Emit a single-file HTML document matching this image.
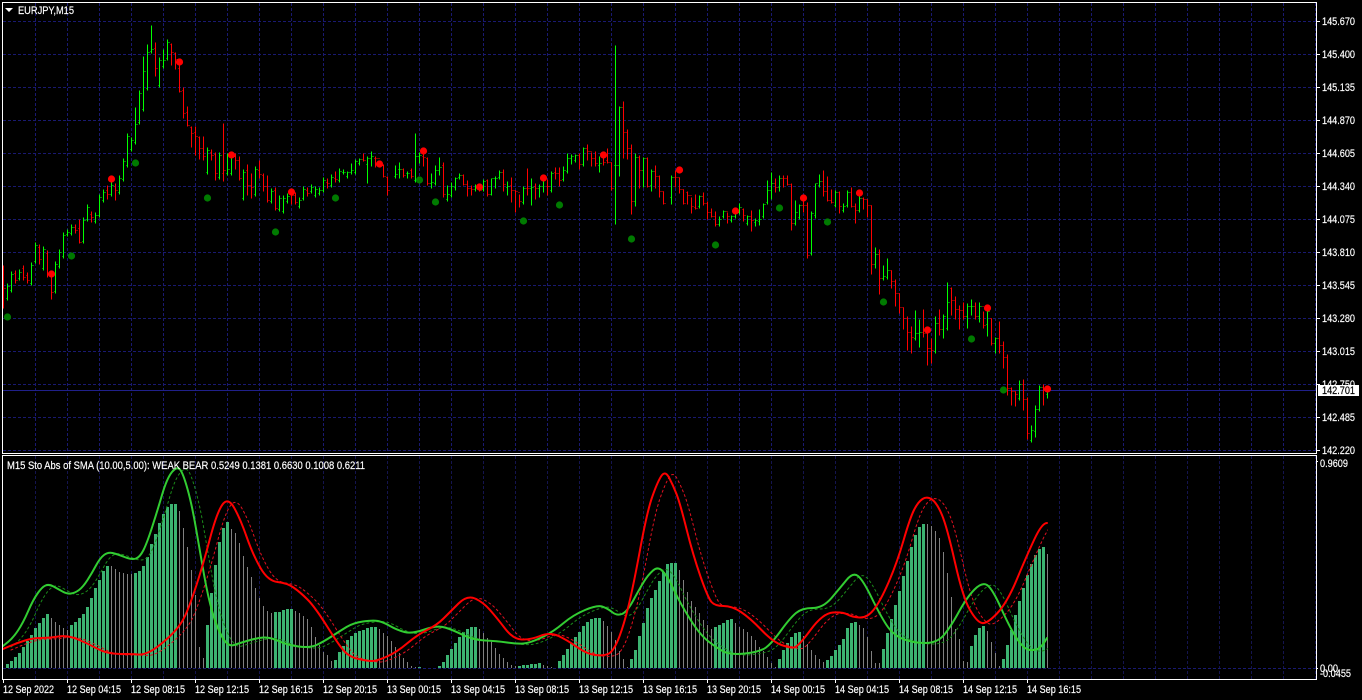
<!DOCTYPE html>
<html><head><meta charset="utf-8"><title>EURJPY,M15</title>
<style>html,body{margin:0;padding:0;background:#000;width:1362px;height:700px;overflow:hidden}svg{display:block}text{font-family:"Liberation Sans",sans-serif;font-size:11px;fill:#fff;stroke:#fff;stroke-width:.18}</style></head>
<body>
<svg width="1362" height="700" viewBox="0 0 1362 700" xmlns="http://www.w3.org/2000/svg">
<defs>
<clipPath id="c"><rect x="3" y="456" width="1045" height="223"/></clipPath>
<path id="gs" d="M3 646L8 642Q13 638 18 630.5Q23 623 28 611.5Q33 600 37.5 593.5Q42 587 45.5 585.5Q49 584 53.5 586.5Q58 589 62.5 591.5Q67 594 71 593.5Q75 593 79 590Q83 587 87.5 580Q92 573 96 565.5Q100 558 104 555Q108 552 112.5 553Q117 554 124.5 557Q132 560 136 558.5Q140 557 143.5 550Q147 543 152 527.5Q157 512 162 495Q167 478 172 472Q177 466 180 469.5Q183 473 187.5 489Q192 505 196 528.5Q200 552 204 574.5Q208 597 212.5 612.5Q217 628 222.5 637.5Q228 647 234 645Q240 643 248.5 640.5Q257 638 263.5 637.5Q270 637 278.5 641Q287 645 298.5 646.5Q310 648 316.5 645Q323 642 331.5 636.5Q340 631 346.5 627Q353 623 363 621.5Q373 620 378 621Q383 622 390 626Q397 630 404.5 632Q412 634 424.5 629.5Q437 625 445 627.5Q453 630 463 635Q473 640 485 640.5Q497 641 507 642.5Q517 644 523.5 643.5Q530 643 541.5 637.5Q553 632 563 623.5Q573 615 585 610Q597 605 602 606.5Q607 608 612 612Q617 616 622 614Q627 612 633.5 600Q640 588 644 581.5Q648 575 653 570.5Q658 566 663 571.5Q668 577 674 590Q680 603 690 619Q700 635 708.5 641.5Q717 648 723.5 651.5Q730 655 745 653.5Q760 652 766 647.5Q772 643 781 630.5Q790 618 796 613Q802 608 812.5 608Q823 608 831.5 598Q840 588 846.5 580Q853 572 858 576Q863 580 871.5 597.5Q880 615 886.5 625Q893 635 903 639Q913 643 925 643Q937 643 943.5 635.5Q950 628 958.5 612.5Q967 597 974.5 589.5Q982 582 987 585Q992 588 1001 608Q1010 628 1016.5 638Q1023 648 1028 649.5Q1033 651 1037.5 649Q1042 647 1047 638"/>
<path id="rs" d="M3 649L10 646Q17 643 25 640.5Q33 638 41.5 638Q50 638 58.5 636.5Q67 635 77 639Q87 643 97 648.5Q107 654 120 654Q133 654 138 654.5Q143 655 150 651.5Q157 648 168.5 637.5Q180 627 185 616Q190 605 196.5 585Q203 565 210 538.5Q217 512 222.5 504.5Q228 497 234 507.5Q240 518 246.5 536.5Q253 555 260.5 568Q268 581 277.5 582Q287 583 293.5 587.5Q300 592 307.5 599.5Q315 607 327.5 627Q340 647 345 652Q350 657 358.5 659Q367 661 372 661Q377 661 387 656.5Q397 652 407 643.5Q417 635 427 630Q437 625 443.5 618.5Q450 612 458.5 603.5Q467 595 475 598.5Q483 602 490 610Q497 618 505 628.5Q513 639 521.5 639.5Q530 640 540 636Q550 632 558.5 636Q567 640 577 647Q587 654 595 655Q603 656 608 654Q613 652 618 640Q623 628 628 608Q633 588 640 550Q647 512 652 497.5Q657 483 661 476.5Q665 470 669 477.5Q673 485 676.5 494Q680 503 686.5 529Q693 555 700.5 576.5Q708 598 711.5 602Q715 606 723.5 606Q732 606 741 612Q750 618 761.5 630Q773 642 781.5 645Q790 648 794 647.5Q798 647 810.5 630Q823 613 833 612.5Q843 612 847.5 614.5Q852 617 859.5 617.5Q867 618 873.5 610Q880 602 888.5 582.5Q897 563 903.5 540.5Q910 518 914 510Q918 502 922.5 499Q927 496 932 499.5Q937 503 942 515Q947 527 955 562.5Q963 598 970 610Q977 622 982 623Q987 624 997 613.5Q1007 603 1017 579Q1027 555 1034.5 539Q1042 523 1047 523"/>
</defs>
<rect width="1362" height="700" fill="#000"/>

<!-- grid -->
<g fill="none" stroke="#191970" stroke-width="1" stroke-dasharray="3 2" shape-rendering="crispEdges">
<path d="M3 21.5H1316M3 54.5H1316M3 87.5H1316M3 120.5H1316M3 153.5H1316M3 186.5H1316M3 219.5H1316M3 252.5H1316M3 285.5H1316M3 318.5H1316M3 351.5H1316M3 384.5H1316M3 417.5H1316M3 450.5H1316"/>
<path d="M35.5 3V453M67.5 3V453M99.5 3V453M131.5 3V453M163.5 3V453M195.5 3V453M227.5 3V453M259.5 3V453M291.5 3V453M323.5 3V453M355.5 3V453M387.5 3V453M419.5 3V453M451.5 3V453M483.5 3V453M515.5 3V453M547.5 3V453M579.5 3V453M611.5 3V453M643.5 3V453M675.5 3V453M707.5 3V453M739.5 3V453M771.5 3V453M803.5 3V453M835.5 3V453M867.5 3V453M899.5 3V453M931.5 3V453M963.5 3V453M995.5 3V453M1027.5 3V453M1059.5 3V453M1091.5 3V453M1123.5 3V453M1155.5 3V453M1187.5 3V453M1219.5 3V453M1251.5 3V453M1283.5 3V453M1315.5 3V453"/>
<path stroke="#14144f" d="M35.5 456V679M67.5 456V679M99.5 456V679M131.5 456V679M163.5 456V679M195.5 456V679M227.5 456V679M259.5 456V679M291.5 456V679M323.5 456V679M355.5 456V679M387.5 456V679M419.5 456V679M451.5 456V679M483.5 456V679M515.5 456V679M547.5 456V679M579.5 456V679M611.5 456V679M643.5 456V679M675.5 456V679M707.5 456V679M739.5 456V679M771.5 456V679M803.5 456V679M835.5 456V679M867.5 456V679M899.5 456V679M931.5 456V679M963.5 456V679M995.5 456V679M1027.5 456V679M1059.5 456V679M1091.5 456V679M1123.5 456V679M1155.5 456V679M1187.5 456V679M1219.5 456V679M1251.5 456V679M1283.5 456V679M1315.5 456V679"/>
<path d="M3 668.5H1316"/>
</g>
<path d="M3 390.5H1316" stroke="#20208a" fill="none" shape-rendering="crispEdges"/>

<!-- price bars -->
<g fill="none" stroke-width="1" shape-rendering="crispEdges" transform="translate(.5 .5)">
<path stroke="#00ff00" d="M7 283V300M6 298h1M8 286h1M11 271V292M10 290h1M12 274h1M19 269V280M18 278h1M20 272h1M31 262V285M30 283h1M32 265h1M35 242V263M34 261h1M36 245h1M43 246V270M42 268h1M44 249h1M55 261V293M54 291h1M56 264h1M59 249V268M58 266h1M60 252h1M63 232V258M62 256h1M64 235h1M67 229V236M66 234h1M68 232h1M71 224V235M70 233h1M72 227h1M83 217V243M82 241h1M84 220h1M87 204V221M86 219h1M88 207h1M95 212V223M94 221h1M96 215h1M99 194V217M98 215h1M100 197h1M103 189V202M102 200h1M104 192h1M111 182V196M110 194h1M112 185h1M119 175V194M118 192h1M120 178h1M123 158V181M122 179h1M124 161h1M127 133V167M126 165h1M128 136h1M131 137V151M130 149h1M132 140h1M135 107V144M134 142h1M136 124h1M139 90V124M138 122h1M140 93h1M143 56V111M142 109h1M144 71h1M147 44V90M146 88h1M148 52h1M151 25V53M150 51h1M152 49h1M159 57V87M158 85h1M160 60h1M163 49V68M162 66h1M164 60h1M167 39V60M166 58h1M168 42h1M207 147V174M206 172h1M208 150h1M219 152V179M218 177h1M220 155h1M227 153V175M226 173h1M228 169h1M231 153V175M230 173h1M232 156h1M243 169V200M242 198h1M244 172h1M255 166V196M254 194h1M256 169h1M271 188V203M270 201h1M272 191h1M279 195V211M278 209h1M280 198h1M283 195V213M282 211h1M284 198h1M287 193V203M286 201h1M288 196h1M299 197V208M298 206h1M300 200h1M303 186V200M302 198h1M304 189h1M311 184V193M310 191h1M312 187h1M315 186V197M314 195h1M316 189h1M319 187V195M318 193h1M320 190h1M323 177V192M322 190h1M324 180h1M331 174V187M330 185h1M332 177h1M339 168V182M338 180h1M340 171h1M343 169V174M342 172h1M344 172h1M347 171V178M346 176h1M348 172h1M351 163V174M350 172h1M352 170h1M355 159V174M354 172h1M356 161h1M359 158V165M358 163h1M360 159h1M367 156V183M366 164h1M368 158h1M371 151V166M370 158h1M372 156h1M395 165V178M394 176h1M396 174h1M399 162V178M398 169h1M400 169h1M407 171V178M406 173h1M408 173h1M415 133V182M414 180h1M416 156h1M419 152V163M418 156h1M420 155h1M431 173V188M430 183h1M432 182h1M435 165V185M434 183h1M436 170h1M439 157V175M438 170h1M440 167h1M447 185V201M446 199h1M448 194h1M451 182V197M450 195h1M452 186h1M455 177V190M454 187h1M456 178h1M459 173V179M458 177h1M460 175h1M475 184V191M474 189h1M476 186h1M483 179V191M482 189h1M484 181h1M491 178V195M490 194h1M492 178h1M495 176V188M494 178h1M496 178h1M499 170V179M498 177h1M500 172h1M507 181V195M506 187h1M508 186h1M523 186V204M522 202h1M524 188h1M531 178V205M530 188h1M532 187h1M539 184V197M538 188h1M540 186h1M543 175V192M542 186h1M544 179h1M551 171V192M550 190h1M552 173h1M563 166V181M562 179h1M564 170h1M567 153V173M566 171h1M568 158h1M571 154V164M570 158h1M572 156h1M575 154V162M574 160h1M576 155h1M583 147V166M582 164h1M584 148h1M599 156V172M598 165h1M600 163h1M615 45V224M614 165h1M616 165h1M619 106V176M618 165h1M620 107h1M635 153V206M634 201h1M636 157h1M643 157V187M642 170h1M644 158h1M651 169V191M650 185h1M652 171h1M671 175V204M670 197h1M672 177h1M699 195V208M698 206h1M700 196h1M719 216V226M718 224h1M720 219h1M723 210V218M722 216h1M724 211h1M731 215V222M730 220h1M732 216h1M735 207V218M734 216h1M736 210h1M739 203V214M738 212h1M740 207h1M747 215V225M746 223h1M748 216h1M755 218V226M754 222h1M756 220h1M759 209V225M758 221h1M760 219h1M763 203V218M762 216h1M764 204h1M767 180V204M766 202h1M768 190h1M771 172V199M770 190h1M772 183h1M779 175V191M778 187h1M780 178h1M795 200V225M794 223h1M796 212h1M799 204V219M798 217h1M800 205h1M811 211V255M810 253h1M812 213h1M815 183V218M814 215h1M816 183h1M819 174V187M818 185h1M820 181h1M835 190V207M834 205h1M836 192h1M843 203V212M842 210h1M844 206h1M847 190V207M846 205h1M848 192h1M859 193V212M858 210h1M860 198h1M875 247V268M874 264h1M876 254h1M883 265V280M882 278h1M884 276h1M887 258V279M886 277h1M888 270h1M915 310V340M914 338h1M916 333h1M919 319V347M918 333h1M920 332h1M935 316V353M934 351h1M936 323h1M943 314V338M942 329h1M944 316h1M947 282V330M946 328h1M948 302h1M967 303V328M966 316h1M968 306h1M971 299V315M970 306h1M972 306h1M979 302V322M978 316h1M980 306h1M987 310V336M986 324h1M988 311h1M995 337V353M994 343h1M996 338h1M1019 380V400M1018 398h1M1020 384h1M1031 425V442M1030 440h1M1032 430h1M1035 405V437M1034 431h1M1036 409h1M1039 385V411M1038 409h1M1040 387h1M1047 388V398M1046 394h1M1048 389h1"/>
<path stroke="#ff0000" d="M3 265V308M2 268h1M4 288h1M15 270V283M14 273h1M16 280h1M23 265V280M22 268h1M24 277h1M27 272V283M26 275h1M28 280h1M39 244V264M38 247h1M40 259h1M47 250V277M46 253h1M48 274h1M51 273V299M50 276h1M52 292h1M75 224V233M74 227h1M76 230h1M79 219V243M78 228h1M80 242h1M91 211V222M90 214h1M92 217h1M107 185V199M106 190h1M108 194h1M115 183V200M114 186h1M116 190h1M155 42V76M154 48h1M156 68h1M171 43V65M170 44h1M172 52h1M175 52V69M174 53h1M176 59h1M179 63V92M178 68h1M180 91h1M183 87V118M182 90h1M184 113h1M187 106V126M186 112h1M188 125h1M191 126V147M190 127h1M192 133h1M195 126V155M194 132h1M196 136h1M199 136V159M198 137h1M200 148h1M203 136V160M202 148h1M204 156h1M211 149V160M210 152h1M212 155h1M215 152V180M214 154h1M216 173h1M223 123V181M222 173h1M224 170h1M235 153V169M234 156h1M236 160h1M239 156V180M238 160h1M240 178h1M247 164V195M246 170h1M248 185h1M251 173V198M250 185h1M252 187h1M259 160V178M258 170h1M260 174h1M263 173V191M262 175h1M264 186h1M267 175V202M266 186h1M268 200h1M275 187V210M274 190h1M276 208h1M291 190V204M290 194h1M292 195h1M295 192V204M294 195h1M296 202h1M307 187V196M306 190h1M308 193h1M327 178V188M326 182h1M328 183h1M335 171V182M334 178h1M336 179h1M363 153V161M362 159h1M364 160h1M375 156V167M374 158h1M376 158h1M379 160V167M378 158h1M380 164h1M383 164V177M382 165h1M384 176h1M387 176V195M386 177h1M388 190h1M403 168V177M402 169h1M404 175h1M411 168V178M410 170h1M412 176h1M423 147V166M422 156h1M424 157h1M427 157V185M426 158h1M428 183h1M443 162V197M442 165h1M444 194h1M463 174V185M462 175h1M464 184h1M467 180V196M466 184h1M468 188h1M471 185V195M470 188h1M472 189h1M479 184V191M478 189h1M480 190h1M487 179V196M486 180h1M488 194h1M503 169V191M502 172h1M504 184h1M511 177V202M510 185h1M512 190h1M515 190V212M514 190h1M516 191h1M519 194V207M518 192h1M520 201h1M527 168V195M526 188h1M528 188h1M535 183V199M534 186h1M536 188h1M547 179V195M546 186h1M548 186h1M555 167V179M554 172h1M556 173h1M559 167V186M558 173h1M560 180h1M579 153V169M578 155h1M580 164h1M587 144V160M586 148h1M588 151h1M591 152V166M590 151h1M592 158h1M595 151V166M594 158h1M596 163h1M603 154V165M602 156h1M604 162h1M607 148V163M606 160h1M608 162h1M611 162V190M610 162h1M612 188h1M623 101V158M622 107h1M624 132h1M627 129V159M626 132h1M628 148h1M631 144V214M630 148h1M632 201h1M639 155V188M638 157h1M640 170h1M647 157V187M646 158h1M648 186h1M655 165V188M654 171h1M656 176h1M659 175V197M658 176h1M660 191h1M663 191V204M662 191h1M664 203h1M675 170V187M674 177h1M676 177h1M679 177V193M678 177h1M680 189h1M683 189V204M682 189h1M684 203h1M687 191V204M686 192h1M688 195h1M691 197V213M690 195h1M692 206h1M695 194V209M694 207h1M696 208h1M703 192V205M702 196h1M704 203h1M707 201V219M706 203h1M708 212h1M711 208V217M710 212h1M712 216h1M715 211V226M714 216h1M716 224h1M727 212V223M726 211h1M728 216h1M743 208V221M742 209h1M744 215h1M751 210V231M750 216h1M752 220h1M775 178V192M774 183h1M776 187h1M783 175V187M782 178h1M784 178h1M787 175V185M786 178h1M788 184h1M791 183V230M790 184h1M792 223h1M803 195V212M802 205h1M804 205h1M807 202V258M806 205h1M808 255h1M823 170V196M822 181h1M824 191h1M827 176V201M826 191h1M828 200h1M831 189V203M830 200h1M832 202h1M839 191V213M838 192h1M840 206h1M851 187V207M850 192h1M852 206h1M855 203V223M854 206h1M856 210h1M863 197V209M862 198h1M864 199h1M867 199V217M866 199h1M868 205h1M871 205V274M870 205h1M872 264h1M879 249V294M878 254h1M880 278h1M891 270V288M890 270h1M892 281h1M895 279V306M894 281h1M896 293h1M899 293V313M898 293h1M900 307h1M903 307V329M902 307h1M904 318h1M907 316V350M906 318h1M908 332h1M911 326V353M910 332h1M912 337h1M923 309V337M922 332h1M924 333h1M927 329V365M926 333h1M928 348h1M931 338V363M930 348h1M932 350h1M939 309V335M938 323h1M940 329h1M951 287V315M950 288h1M952 300h1M955 296V319M954 300h1M956 309h1M959 305V329M958 309h1M960 310h1M963 302V319M962 310h1M964 316h1M975 302V319M974 306h1M976 316h1M983 311V328M982 306h1M984 325h1M991 318V345M990 318h1M992 343h1M999 321V353M998 338h1M1000 345h1M1003 341V368M1002 345h1M1004 357h1M1007 354V395M1006 357h1M1008 388h1M1011 387V405M1010 388h1M1012 391h1M1015 391V406M1014 391h1M1016 394h1M1023 379V410M1022 384h1M1024 399h1M1027 397V439M1026 399h1M1028 433h1M1043 384V405M1042 387h1M1044 388h1"/>
</g>

<!-- dots -->
<g fill="#ff0000"><circle cx="51.5" cy="274" r="3.6"/><circle cx="111.5" cy="179" r="3.6"/><circle cx="179.5" cy="62" r="3.6"/><circle cx="231.5" cy="155" r="3.6"/><circle cx="291.5" cy="192" r="3.6"/><circle cx="379.5" cy="164" r="3.6"/><circle cx="423.5" cy="151" r="3.6"/><circle cx="479.5" cy="187" r="3.6"/><circle cx="543.5" cy="178" r="3.6"/><circle cx="603.5" cy="155" r="3.6"/><circle cx="679.5" cy="170" r="3.6"/><circle cx="735.5" cy="211" r="3.6"/><circle cx="803.5" cy="198" r="3.6"/><circle cx="859.5" cy="193" r="3.6"/><circle cx="927.5" cy="330" r="3.6"/><circle cx="987.5" cy="308" r="3.6"/><circle cx="1047.5" cy="389" r="3.6"/></g>
<g fill="#007a00"><circle cx="7.5" cy="317" r="3.6"/><circle cx="71.5" cy="256" r="3.6"/><circle cx="135.5" cy="163" r="3.6"/><circle cx="207.5" cy="198" r="3.6"/><circle cx="275.5" cy="232" r="3.6"/><circle cx="335.5" cy="198" r="3.6"/><circle cx="419.5" cy="180" r="3.6"/><circle cx="435.5" cy="202" r="3.6"/><circle cx="523.5" cy="221" r="3.6"/><circle cx="559.5" cy="205" r="3.6"/><circle cx="631.5" cy="239" r="3.6"/><circle cx="715.5" cy="245" r="3.6"/><circle cx="779.5" cy="208" r="3.6"/><circle cx="827.5" cy="222" r="3.6"/><circle cx="883.5" cy="302" r="3.6"/><circle cx="971.5" cy="339" r="3.6"/><circle cx="1003.5" cy="390" r="3.6"/></g>

<!-- histogram -->
<g fill="none" shape-rendering="crispEdges" transform="translate(.5 0)">
<path stroke="#808080" stroke-width="1" d="M51 618V668M55 622V668M59 625V668M63 628V668M67 630V668M111 566V668M115 569V668M119 572V668M123 573V668M127 574V668M131 574V668M179 511V668M183 528V668M187 547V668M191 570V668M195 595V668M199 647V668M203 658V668M231 529V668M235 533V668M239 543V668M243 556V668M247 567V668M251 577V668M255 588V668M259 598V668M263 606V668M267 611V668M271 613V668M295 611V668M299 613V668M303 616V668M307 619V668M311 627V668M315 637V668M319 645V668M323 652V668M327 655V668M331 661V668M379 629V668M383 633V668M387 636V668M391 641V668M395 647V668M399 653V668M403 658V668M407 662V668M411 666V668M415 667V668M479 629V668M483 633V668M487 638V668M491 641V668M495 648V668M499 654V668M503 658V668M507 662V668M511 665V668M515 666V668M543 665V668M547 666V668M551 667V668M603 621V668M607 626V668M611 632V668M615 640V668M619 651V668M623 659V668M627 667V668M679 570V668M683 580V668M687 592V668M691 601V668M695 607V668M699 613V668M703 620V668M707 625V668M711 629V668M735 623V668M739 627V668M743 629V668M747 632V668M751 636V668M755 640V668M759 647V668M763 651V668M767 657V668M771 663V668M775 667V668M803 636V668M807 644V668M811 650V668M815 655V668M819 659V668M823 662V668M859 625V668M863 628V668M867 637V668M871 651V668M875 663V668M879 663V668M927 524V668M931 526V668M935 531V668M939 538V668M943 552V668M947 573V668M951 597V668M955 629V668M959 639V668M963 661V668M967 662V668M987 631V668M991 642V668M995 653V668M999 666V668M1047 554V668"/>
<path stroke="#3cb371" stroke-width="3" d="M7 664V668M11 661V668M15 657V668M19 653V668M23 647V668M27 641V668M31 635V668M35 628V668M39 623V668M43 618V668M47 614V668M71 625V668M75 622V668M79 618V668M83 614V668M87 607V668M91 598V668M95 588V668M99 580V668M103 571V668M107 566V668M135 573V668M139 571V668M143 566V668M147 557V668M151 544V668M155 534V668M159 523V668M163 514V668M167 507V668M171 504V668M175 504V668M207 625V668M211 593V668M215 565V668M219 542V668M223 528V668M227 522V668M275 612V668M279 612V668M283 610V668M287 609V668M291 609V668M335 660V668M339 652V668M343 646V668M347 640V668M351 636V668M355 633V668M359 631V668M363 630V668M367 628V668M371 627V668M375 627V668M419 667V668M439 666V668M443 662V668M447 655V668M451 649V668M455 643V668M459 637V668M463 632V668M467 629V668M471 627V668M475 627V668M519 666V668M523 665V668M527 665V668M531 664V668M535 664V668M539 663V668M559 661V668M563 655V668M567 649V668M571 643V668M575 637V668M579 632V668M583 626V668M587 622V668M591 619V668M595 618V668M599 618V668M631 659V668M635 650V668M639 636V668M643 623V668M647 608V668M651 598V668M655 590V668M659 581V668M663 572V668M667 564V668M671 563V668M675 563V668M715 627V668M719 625V668M723 623V668M727 620V668M731 619V668M779 659V668M783 650V668M787 643V668M791 637V668M795 633V668M799 632V668M827 660V668M831 656V668M835 650V668M839 645V668M843 639V668M847 628V668M851 623V668M855 622V668M883 649V668M887 633V668M891 619V668M895 605V668M899 591V668M903 576V668M907 561V668M911 547V668M915 535V668M919 527V668M923 524V668M971 646V668M975 635V668M979 628V668M983 626V668M1003 659V668M1007 645V668M1011 630V668M1015 615V668M1019 601V668M1023 588V668M1027 575V668M1031 564V668M1035 555V668M1039 549V668M1043 547V668"/>
</g>

<!-- indicator lines -->
<g fill="none" clip-path="url(#c)" stroke-linejoin="round" stroke-linecap="round">
<use href="#gs" transform="translate(8 1)" stroke="#1a8a1a" stroke-width="1" stroke-dasharray="2 3"/>
<use href="#rs" transform="translate(8 1)" stroke="#e01020" stroke-width="1" stroke-dasharray="2 3"/>
<use href="#gs" stroke="#32cd32" stroke-width="2"/>
<use href="#rs" stroke="#ff0000" stroke-width="2"/>
</g>

<!-- frames -->
<g fill="none" stroke="#fff" stroke-width="1" shape-rendering="crispEdges">
<path d="M2.5 2.5H1316.5V453.5H2.5Z"/>
<path d="M2.5 455.5H1316.5V679.5H2.5Z"/>
<path d="M1317 21.5h3M1317 54.5h3M1317 87.5h3M1317 120.5h3M1317 153.5h3M1317 186.5h3M1317 219.5h3M1317 252.5h3M1317 285.5h3M1317 318.5h3M1317 351.5h3M1317 384.5h3M1317 417.5h3M1317 450.5h3M1317 668.5h1M1317 461.5h1"/>
<path d="M3.5 680v3M67.5 680v3M131.5 680v3M195.5 680v3M259.5 680v3M323.5 680v3M387.5 680v3M451.5 680v3M515.5 680v3M579.5 680v3M643.5 680v3M707.5 680v3M771.5 680v3M835.5 680v3M899.5 680v3M963.5 680v3M1027.5 680v3"/>
</g>

<!-- title -->
<path d="M5 8h8l-4 4z" fill="#fff"/>
<text x="18" y="14" textLength="56" lengthAdjust="spacingAndGlyphs">EURJPY,M15</text>
<text x="7" y="469" textLength="358" lengthAdjust="spacingAndGlyphs">M15 Sto Abs of SMA (10.00,5.00): WEAK BEAR 0.5249 0.1381 0.6630 0.1008 0.6211</text>

<!-- price axis -->
<g>
<text x="1322" y="25" textLength="33" lengthAdjust="spacingAndGlyphs">145.670</text>
<text x="1322" y="58" textLength="33" lengthAdjust="spacingAndGlyphs">145.400</text>
<text x="1322" y="91" textLength="33" lengthAdjust="spacingAndGlyphs">145.135</text>
<text x="1322" y="124" textLength="33" lengthAdjust="spacingAndGlyphs">144.870</text>
<text x="1322" y="157" textLength="33" lengthAdjust="spacingAndGlyphs">144.605</text>
<text x="1322" y="190" textLength="33" lengthAdjust="spacingAndGlyphs">144.340</text>
<text x="1322" y="223" textLength="33" lengthAdjust="spacingAndGlyphs">144.075</text>
<text x="1322" y="256" textLength="33" lengthAdjust="spacingAndGlyphs">143.810</text>
<text x="1322" y="289" textLength="33" lengthAdjust="spacingAndGlyphs">143.545</text>
<text x="1322" y="322" textLength="33" lengthAdjust="spacingAndGlyphs">143.280</text>
<text x="1322" y="355" textLength="33" lengthAdjust="spacingAndGlyphs">143.015</text>
<text x="1322" y="388" textLength="33" lengthAdjust="spacingAndGlyphs">142.750</text>
<text x="1322" y="421" textLength="33" lengthAdjust="spacingAndGlyphs">142.485</text>
<text x="1322" y="454" textLength="33" lengthAdjust="spacingAndGlyphs">142.220</text>
<rect x="1318" y="385" width="41" height="11" fill="#fff"/>
<text x="1322" y="394" textLength="33" lengthAdjust="spacingAndGlyphs" style="fill:#000;stroke:#000">142.701</text>
<text x="1320" y="467" textLength="28" lengthAdjust="spacingAndGlyphs">0.9609</text>
<text x="1320" y="672" textLength="18" lengthAdjust="spacingAndGlyphs">0.00</text>
<text x="1320" y="677" textLength="31" lengthAdjust="spacingAndGlyphs">-0.0455</text>
</g>

<!-- time axis -->
<g>
<text x="3" y="693" textLength="51" lengthAdjust="spacingAndGlyphs">12 Sep 2022</text>
<text x="67" y="693" textLength="54" lengthAdjust="spacingAndGlyphs">12 Sep 04:15</text>
<text x="131" y="693" textLength="54" lengthAdjust="spacingAndGlyphs">12 Sep 08:15</text>
<text x="195" y="693" textLength="54" lengthAdjust="spacingAndGlyphs">12 Sep 12:15</text>
<text x="259" y="693" textLength="54" lengthAdjust="spacingAndGlyphs">12 Sep 16:15</text>
<text x="323" y="693" textLength="54" lengthAdjust="spacingAndGlyphs">12 Sep 20:15</text>
<text x="387" y="693" textLength="54" lengthAdjust="spacingAndGlyphs">13 Sep 00:15</text>
<text x="451" y="693" textLength="54" lengthAdjust="spacingAndGlyphs">13 Sep 04:15</text>
<text x="515" y="693" textLength="54" lengthAdjust="spacingAndGlyphs">13 Sep 08:15</text>
<text x="579" y="693" textLength="54" lengthAdjust="spacingAndGlyphs">13 Sep 12:15</text>
<text x="643" y="693" textLength="54" lengthAdjust="spacingAndGlyphs">13 Sep 16:15</text>
<text x="707" y="693" textLength="54" lengthAdjust="spacingAndGlyphs">13 Sep 20:15</text>
<text x="771" y="693" textLength="54" lengthAdjust="spacingAndGlyphs">14 Sep 00:15</text>
<text x="835" y="693" textLength="54" lengthAdjust="spacingAndGlyphs">14 Sep 04:15</text>
<text x="899" y="693" textLength="54" lengthAdjust="spacingAndGlyphs">14 Sep 08:15</text>
<text x="963" y="693" textLength="54" lengthAdjust="spacingAndGlyphs">14 Sep 12:15</text>
<text x="1027" y="693" textLength="54" lengthAdjust="spacingAndGlyphs">14 Sep 16:15</text>
</g>
</svg>
</body></html>
